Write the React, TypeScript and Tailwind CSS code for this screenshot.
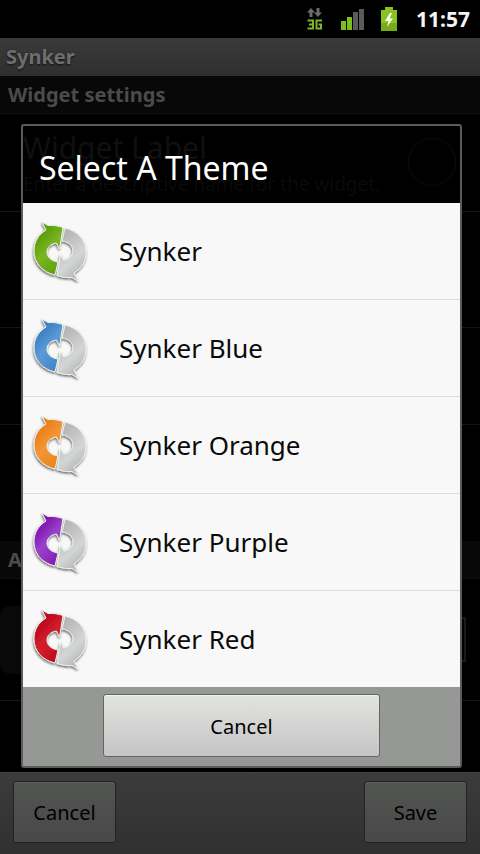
import { useId } from "react";

const themes = [
  { name: "Synker", light: "#7ab523", base: "#62a30c", dark: "#4a8a06" },
  { name: "Synker Blue", light: "#5c9bd6", base: "#4286c8", dark: "#2f6fb2" },
  { name: "Synker Orange", light: "#f39636", base: "#ec8420", dark: "#d87212" },
  { name: "Synker Purple", light: "#9a42cc", base: "#8420b4", dark: "#6b1098" },
  { name: "Synker Red", light: "#d3202e", base: "#c00a20", dark: "#9c0618" },
];

type Theme = (typeof themes)[number];

const ARROW =
  "M12 6L18 9.500C23 9 28 10 33 11.500L29.500 33L26.500 27C20 28 17 32 17 36C17 41 21 45 28 46L25 59C12 56 4 47 4 35C4 26 8 19 16 14Z";

function SyncIcon({ theme }: { theme: Theme }) {
  const id = useId();
  return (
    <svg viewBox="0 0 60 70" className="h-[70px] w-[60px] shrink-0" aria-hidden="true">
      <defs>
        <linearGradient id={`${id}c`} x1="0" y1="0" x2="0.6" y2="1">
          <stop offset="0" stopColor={theme.dark} />
          <stop offset="0.35" stopColor={theme.base} />
          <stop offset="0.6" stopColor={theme.light} />
          <stop offset="1" stopColor={theme.base} />
        </linearGradient>
        <linearGradient id={`${id}g`} x1="0" y1="0" x2="0.5" y2="1">
          <stop offset="0" stopColor="#a2a4a4" />
          <stop offset="0.5" stopColor="#d4d5d5" />
          <stop offset="1" stopColor="#b4b6b7" />
        </linearGradient>
        <filter id={`${id}s`} x="-20%" y="-20%" width="140%" height="150%">
          <feDropShadow dx="-0.5" dy="1.5" stdDeviation="1.2" floodColor="#000" floodOpacity="0.6" />
        </filter>
      </defs>
      <g filter={`url(#${id}s)`} stroke="#eef2ea" strokeWidth="1" strokeLinejoin="round">
        <path d={ARROW} transform="rotate(180 30 35.5)" fill={`url(#${id}g)`} />
        <path d={ARROW} fill={`url(#${id}c)`} />
      </g>
    </svg>
  );
}

function StatusBar() {
  return (
    <header className="flex h-[38px] shrink-0 items-center justify-end bg-black pr-2.5">
      <svg viewBox="0 0 20 26" className="mr-3.5 h-[26px] w-5" aria-label="3G data" fill="none">
        <path d="M5 2L9 6.500H6.500V11H3.500V6.500H1Z M12 11L8 6.500H10.500V2H13.500V6.500H16Z" fill="#6c6c6c" />
        <path d="M1.500 14.500H7V22.500H1.500M3 18.500H7M16 14.500H10.500V22.500H15V18.500H12.500" stroke="#7fb52c" strokeWidth="2" />
      </svg>
      <svg viewBox="0 0 26 24" className="mr-3.5 h-6 w-[26px]" aria-label="Signal strength">
        <path d="M1 14H6V23H1Z M7 10H12V23H7Z" fill="#7fbd1c" />
        <path d="M13 5H18V23H13Z M19 2H24V23H19Z" fill="#5b5b5b" />
      </svg>
      <svg viewBox="0 0 18 26" className="mr-[18px] h-[26px] w-[18px]" aria-label="Battery charging">
        <path d="M5 1H13V4H17V25H1V4H5Z" fill="#8cc220" />
        <path d="M1 17H17V25H1Z" fill="#78ab1a" />
        <path d="M10 7L5 15H8.500L7 21L13 12.500H9.500L12 7Z" fill="#fff" />
      </svg>
      <time className="text-[21px] leading-7 font-bold text-[#f4f4f4]">11:57</time>
    </header>
  );
}

function SettingsRow({ className }: { className: string }) {
  return <div className={`shrink-0 border-b border-[#151515] ${className}`} />;
}

function SectionTitle({ children }: { children: string }) {
  return (
    <h2 className="h-[38px] shrink-0 border-b border-[#111] bg-[#080808] px-2 text-xl leading-[38px] font-bold text-[#4b4b4b]">
      {children}
    </h2>
  );
}

function BarButton({ children }: { children: string }) {
  return (
    <button
      type="button"
      className="h-[62px] w-[103px] rounded-[3px] border border-[#222] bg-linear-to-b from-[#535553] to-[#474847] pt-0.5 text-xl text-black shadow-[inset_0_1px_0_#5d5f5d]"
    >
      {children}
    </button>
  );
}

function ThemeDialog() {
  return (
    <div
      role="dialog"
      aria-labelledby="theme-title"
      className="absolute top-[124px] right-[18px] left-[21px] rounded-[3px] border-2 border-[#5b5b5b]"
    >
      <h1 id="theme-title" className="h-[77px] px-4 pt-5 text-[32px] leading-[44px] text-white">
        Select A Theme
      </h1>
      <ul className="divide-y divide-[#dcdcdc] bg-[#f8f8f8]">
        {themes.map((theme) => (
          <li key={theme.name}>
            <button
              type="button"
              className="flex h-24 w-full items-center gap-[29px] pl-[7px] text-left text-[26px] text-[#0a0a0a]"
            >
              <SyncIcon theme={theme} />
              {theme.name}
            </button>
          </li>
        ))}
      </ul>
      <div className="flex h-[79px] justify-center bg-[#959895] pt-[7px]">
        <button
          type="button"
          className="h-[63px] w-[277px] rounded-[3px] border border-[#646664] bg-linear-to-b from-[#e2e4e1] to-[#c4c5c4] pt-0.5 text-xl text-black shadow-[inset_0_1px_0_#f2f2f2]"
        >
          Cancel
        </button>
      </div>
    </div>
  );
}

export default function App() {
  return (
    <div className="relative flex min-h-screen flex-col bg-black font-['Noto_Sans','Open_Sans',sans-serif]">
      <StatusBar />
      <div className="h-[38px] shrink-0 bg-linear-to-b from-[#3a3a3a] to-[#2f2f2f] px-1.5 text-xl leading-[38px] font-bold text-[#6e6e6e] [text-shadow:0_1px_2px_#111]">
        Synker
      </div>
      <main className="flex flex-1 flex-col">
        <SectionTitle>Widget settings</SectionTitle>
        <div className="flex h-[98px] shrink-0 items-start justify-between border-b border-[#151515] pt-3 pr-6 pl-[23px]">
          <div>
            <div className="text-3xl leading-[44px] text-[#101010]">Widget Label</div>
            <div className="text-[19px] leading-7 text-[#0a0a0a]">Enter a descriptive name for the widget.</div>
          </div>
          <span className="mt-3 size-12 shrink-0 rounded-full border border-[#0c0c0c]" />
        </div>
        <SettingsRow className="h-[116px]" />
        <SettingsRow className="h-[97px]" />
        <div className="h-[116px] shrink-0" />
        <SectionTitle>Appearance</SectionTitle>
        <div className="flex h-[122px] shrink-0 items-center justify-between border-b border-[#151515] pr-3.5">
          <span className="h-[68px] w-16 rounded-[10px] bg-[#090909]" />
          <span className="h-[45px] w-16 border-2 border-[#1a1a1a]" />
        </div>
      </main>
      <footer className="flex h-[82px] shrink-0 items-center justify-between border-t border-[#444] bg-linear-to-b from-[#3a3c3a] to-[#303030] px-[13px] pb-1">
        <BarButton>Cancel</BarButton>
        <BarButton>Save</BarButton>
      </footer>
      <ThemeDialog />
    </div>
  );
}
